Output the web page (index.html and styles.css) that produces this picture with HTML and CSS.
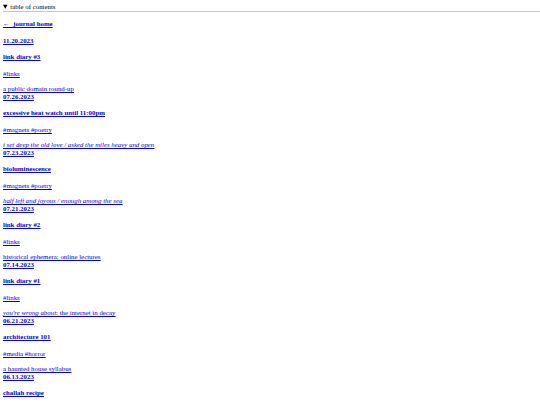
FILE: index.html
```html
<!DOCTYPE html>
<html>
<head>
<meta charset="utf-8">
<link rel="stylesheet" href="styles.css">
</head>
<body>
<details class="toc" open><summary>table of contents</summary></details>
<hr class="rule">
<main class="list">
  <p class="home"><a href="#"><b>←&nbsp;&nbsp;journal home</b></a></p>

  <a class="entry" href="#">
    <b class="date">11.20.2023</b>
    <b class="title">link diary #3</b>
    <span class="tags">#links</span>
    <span class="desc">a public domain round-up</span>
  </a>
  <a class="entry" href="#">
    <b class="date">07.26.2023</b>
    <b class="title">excessive heat watch until 11:00pm</b>
    <span class="tags">#magnets #poetry</span>
    <span class="desc"><i>i set deep the old love / asked the miles heavy and open</i></span>
  </a>
  <a class="entry" href="#">
    <b class="date">07.23.2023</b>
    <b class="title">bioluminescence</b>
    <span class="tags">#magnets #poetry</span>
    <span class="desc"><i>half left and joyous / enough among the sea</i></span>
  </a>
  <a class="entry" href="#">
    <b class="date">07.21.2023</b>
    <b class="title">link diary #2</b>
    <span class="tags">#links</span>
    <span class="desc">historical ephemera: online lectures</span>
  </a>
  <a class="entry" href="#">
    <b class="date">07.14.2023</b>
    <b class="title">link diary #1</b>
    <span class="tags">#links</span>
    <span class="desc"><i>you're wrong about</i>: the internet in decay</span>
  </a>
  <a class="entry" href="#">
    <b class="date">06.21.2023</b>
    <b class="title">architecture 101</b>
    <span class="tags">#media #horror</span>
    <span class="desc">a haunted house syllabus</span>
  </a>
  <a class="entry" href="#">
    <b class="date">06.13.2023</b>
    <b class="title">challah recipe</b>
    <span class="tags">#food</span>
    <span class="desc">bread</span>
  </a>
</main>
</body>
</html>
```
FILE: styles.css
```css
html, body {
  margin: 0;
  padding: 0;
  background: #fff;
}
body {
  padding: 3px 3px 0 3px;
  font-family: "Liberation Serif", "Times New Roman", serif;
  font-size: 6.85px;
  line-height: 8px;
  color: #000;
}
.toc summary {
  cursor: pointer;
  line-height: 8px;
}
.rule {
  border: 0;
  border-top: 1px solid #c8c8c8;
  margin: 0 -3px 0 0;
  height: 0;
}
.list {
  display: flex;
  flex-direction: column;
  padding-top: 8px;
}
.home {
  margin: 0 0 9px 0;
}
a {
  color: #0000ee;
}
.entry {
  display: flex;
  flex-direction: column;
  align-items: flex-start;
}
.entry span, .entry b {
  text-decoration: underline;
}
.date {
  margin-bottom: 8px;
}
.title {
  margin-bottom: 9px;
}
.tags {
  margin-bottom: 7px;
}
```
